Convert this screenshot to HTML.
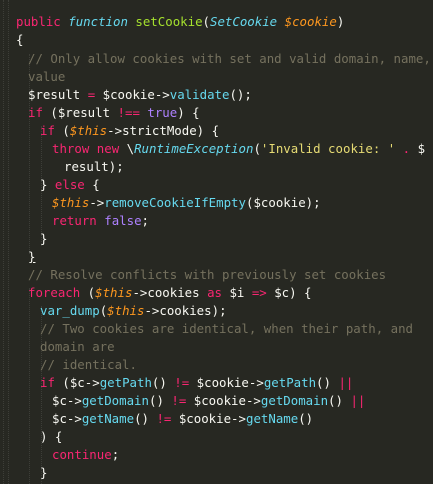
<!DOCTYPE html>
<html><head><meta charset="utf-8"><style>
html,body{margin:0;padding:0;background:#272822;width:433px;height:484px;overflow:hidden}
.c{position:relative;font-family:"DejaVu Sans Mono","Liberation Mono",monospace;font-size:12.4px;color:#f8f8f2;}
.l{position:absolute;height:18px;line-height:18px;white-space:pre;left:16px}
.k{color:#f92672}.s{color:#66d9ef;font-style:italic}.f{color:#a6e22e}.v{color:#fd971f;font-style:italic}
.m{color:#75715e}.n{color:#66d9ef}.p{color:#ae81ff}.y{color:#e6db74}
.g{position:absolute;top:0;width:0;border-left:1px dotted #3d3e38;height:484px}
</style></head><body><div class="c">
<div class="g" style="left:3px"></div><div class="g" style="left:8px"></div>
<div class="g" style="left:29px;top:54px;height:200px"></div>
<div class="g" style="left:41px;top:126px;height:120px"></div>
<div class="g" style="left:29px;top:288px;height:196px"></div>
<div class="g" style="left:41px;top:306px;height:178px"></div>
<div class="l" style="top:13px"><span class="k">public</span> <span class="s">function</span> <span class="f">setCookie</span>(<span class="s">SetCookie</span> <span class="v">$cookie</span>)</div>
<div class="l" style="top:31px">{</div>
<div class="l m" style="top:50px;left:28px">// Only allow cookies with set and valid domain, name,</div>
<div class="l m" style="top:68px;left:28px">value</div>
<div class="l" style="top:86px;left:28px">$result <span class="k">=</span> $cookie-&gt;<span class="n">validate</span>();</div>
<div class="l" style="top:104px;left:28px"><span class="k">if</span> ($result <span class="k">!==</span> <span class="p">true</span>) {</div>
<div class="l" style="top:122px;left:40px"><span class="k">if</span> (<span class="v">$this</span>-&gt;strictMode) {</div>
<div class="l" style="top:140px;left:52px"><span class="k">throw</span> <span class="k">new</span> \<span class="s">RuntimeException</span>(<span class="y">'Invalid cookie: '</span> <span class="k">.</span> $</div>
<div class="l" style="top:158px;left:64px">result);</div>
<div class="l" style="top:176px;left:40px">} <span class="k">else</span> {</div>
<div class="l" style="top:194px;left:52px"><span class="v">$this</span>-&gt;<span class="n">removeCookieIfEmpty</span>($cookie);</div>
<div class="l" style="top:212px;left:52px"><span class="k">return</span> <span class="p">false</span>;</div>
<div class="l" style="top:230px;left:40px">}</div>
<div class="l" style="top:248px;left:28px;text-decoration:underline">}</div>
<div class="l m" style="top:266px;left:28px">// Resolve conflicts with previously set cookies</div>
<div class="l" style="top:284px;left:28px"><span class="k">foreach</span> (<span class="v">$this</span>-&gt;cookies <span class="k">as</span> $i <span class="k">=&gt;</span> $c) {</div>
<div class="l" style="top:302px;left:40px"><span class="n">var_dump</span>(<span class="v">$this</span>-&gt;cookies);</div>
<div class="l m" style="top:320px;left:40px">// Two cookies are identical, when their path, and</div>
<div class="l m" style="top:338px;left:40px">domain are</div>
<div class="l m" style="top:356px;left:40px">// identical.</div>
<div class="l" style="top:374px;left:40px"><span class="k">if</span> ($c-&gt;<span class="n">getPath</span>() <span class="k">!=</span> $cookie-&gt;<span class="n">getPath</span>() <span class="k">||</span></div>
<div class="l" style="top:392px;left:52px">$c-&gt;<span class="n">getDomain</span>() <span class="k">!=</span> $cookie-&gt;<span class="n">getDomain</span>() <span class="k">||</span></div>
<div class="l" style="top:410px;left:52px">$c-&gt;<span class="n">getName</span>() <span class="k">!=</span> $cookie-&gt;<span class="n">getName</span>()</div>
<div class="l" style="top:428px;left:40px">) {</div>
<div class="l" style="top:446px;left:52px"><span class="k">continue</span>;</div>
<div class="l" style="top:464px;left:40px">}</div>
</div></body></html>
